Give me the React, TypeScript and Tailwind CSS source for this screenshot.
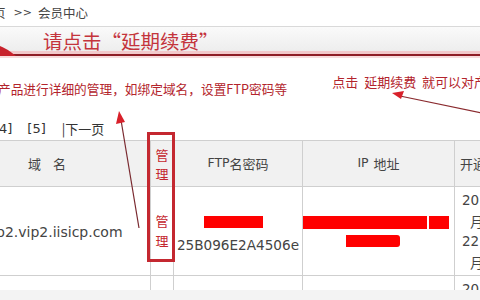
import React from "react";

const cjk = { fontFamily: '"Noto Sans CJK SC", "Noto Sans", sans-serif' };
const verdana = { fontFamily: '"DejaVu Sans", "Noto Sans CJK SC", sans-serif' };

function Arrows() {
  return (
    <svg className="pointer-events-none absolute left-0 top-0" width="480" height="300" viewBox="0 0 480 300">
      {/* right arrow: points to 延期续费 */}
      <line x1="482" y1="113" x2="400" y2="96" stroke="#8a2a2e" strokeWidth="1.2" />
      <polygon points="392,93 404,91 401,99" fill="#d8202a" />
      {/* left arrow: from table up to the text */}
      <line x1="139" y1="228" x2="121" y2="120" stroke="#7a2a30" strokeWidth="1.2" />
      <polygon points="119,111 116,124 125,122" fill="#d8202a" />
    </svg>
  );
}

export default function App() {
  return (
    <div className="relative h-[300px] w-[480px] overflow-hidden bg-white text-[#333]" style={cjk}>
      {/* Breadcrumb */}
      <div className="flex h-[27px] items-center gap-[8px] border-b border-[#d9d9d9] text-[12.5px] text-[#444]">
        <span className="-ml-[7px]">页</span>
        <span style={verdana} className="text-[11px]">&gt;&gt;</span>
        <span className="-ml-[2px]">会员中心</span>
      </div>

      {/* Red title bar */}
      <div className="relative h-[29px] border-b-2 border-[#8e1e26] bg-gradient-to-b from-[#fafafa] to-[#ececec]">
        <div className="pl-[43px] text-[19.5px] leading-[28px] text-[#c4343c]">请点击“延期续费”</div>
        <div className="absolute bottom-0 left-0 right-0 h-[3px] bg-[#f2c9cb]" />
        <svg className="absolute -bottom-[2px] left-0" width="16" height="12" viewBox="0 0 16 12">
          <path d="M0 2 Q6 4 16 12 L0 12 Z" fill="#c8222c" />
        </svg>
      </div>
      <div className="h-[2px] bg-[#f7dcdd]" />

      {/* Notes */}
      <div className="flex items-start justify-between">
        <div className="mt-[23px] -ml-[2px] whitespace-nowrap text-[12.7px] leading-[16px] text-[#b3242c]">
          产品进行详细的管理，如绑定域名，设置FTP密码等
        </div>
        <div className="mt-[16px] -mr-[7px] whitespace-nowrap text-[13px] leading-[16px] text-[#b3242c]">
          点击&nbsp;&nbsp;延期续费&nbsp;&nbsp;就可以对产
        </div>
      </div>

      {/* Pagination */}
      <div className="mt-[24px] flex h-[16px] items-center text-[13px] text-[#333]" style={verdana}>
        <span className="-ml-[1px]">4]</span>
        <span className="ml-[15px]">[5]</span>
        <span className="ml-[16px]" style={cjk}>|下一页</span>
      </div>

      {/* Table */}
      <div className="absolute left-0 top-[140px] w-[520px]">
        <div className="flex h-[47px] border-y border-[#cfcfcf] bg-[#f1f1f1] text-[13px] text-[#444]">
          <div className="flex w-[151px] items-center border-r border-[#cfcfcf] pl-[28px] tracking-[12px]">域名</div>
          <div className="flex w-[23px] flex-col items-center justify-center border-r border-[#cfcfcf] text-[13px] leading-[19px] text-[#c4262e]">
            <span>管</span>
            <span>理</span>
          </div>
          <div className="flex w-[129px] items-center justify-center border-r border-[#cfcfcf]" style={verdana}>
            <span className="text-[12.5px]">FTP</span>
            <span style={cjk}>名密码</span>
          </div>
          <div className="flex w-[152px] items-center justify-center border-r border-[#cfcfcf]" style={verdana}>
            <span className="text-[12.5px]">IP</span>
            <span className="ml-[5px]" style={cjk}>地址</span>
          </div>
          <div className="flex flex-1 items-center pl-[5px]">开通时间</div>
        </div>

        <div className="flex h-[89px] border-b border-[#cfcfcf] text-[14px] text-[#444]" style={verdana}>
          <div className="flex w-[151px] items-center border-r border-[#cfcfcf] pt-[2px]">
            <span className="-ml-[4px] whitespace-nowrap">p2.vip2.iisicp.com</span>
          </div>
          <div className="flex w-[23px] flex-col items-center justify-center border-r border-[#cfcfcf] text-[13px] leading-[20px] text-[#c4262e]" style={cjk}>
            <span>管</span>
            <span>理</span>
          </div>
          <div className="flex w-[129px] flex-col items-center border-r border-[#cfcfcf] pt-[29px]">
            <div className="-ml-[10px] h-[12px] w-[59px] bg-[#f00]" />
            <div className="mt-[9px] whitespace-nowrap text-[13.6px] leading-[16px]">25B096E2A4506e</div>
          </div>
          <div className="flex w-[152px] flex-col border-r border-[#cfcfcf] pt-[29px]">
            <div className="flex gap-[2px]">
              <div className="h-[13px] w-[124px] bg-[#f00]" />
              <div className="h-[13px] w-[20px] bg-[#f00]" />
            </div>
            <div className="ml-[43px] mt-[6px] h-[12px] w-[54px] rounded-r-[3px] bg-[#f00]" />
          </div>
          <div className="flex flex-1 flex-col pt-[3px] text-[13.5px] leading-[20.5px]">
            <span className="pl-[7px]">2012-</span>
            <span className="pl-[15px]" style={cjk}>月</span>
            <span className="pl-[7px]">22</span>
            <span className="pl-[15px]" style={cjk}>月</span>
          </div>
        </div>

        <div className="flex h-[40px] text-[13.5px] text-[#444]" style={verdana}>
          <div className="w-[151px] border-r border-[#cfcfcf]" />
          <div className="w-[23px] border-r border-[#cfcfcf]" />
          <div className="w-[129px] border-r border-[#cfcfcf]" />
          <div className="w-[152px] border-r border-[#cfcfcf]" />
          <div className="flex-1 pl-[7px] pt-[3px]">2012</div>
        </div>
      </div>

      {/* Highlight around the 管理 column */}
      <div className="absolute left-[147px] top-[132px] h-[130px] w-[28px] border-[3px] border-[#c42830]" />

      <Arrows />

      {/* faded bottom strip */}
      <div className="absolute bottom-0 left-0 h-[10px] w-full bg-[#f3f3f3]" />
    </div>
  );
}
